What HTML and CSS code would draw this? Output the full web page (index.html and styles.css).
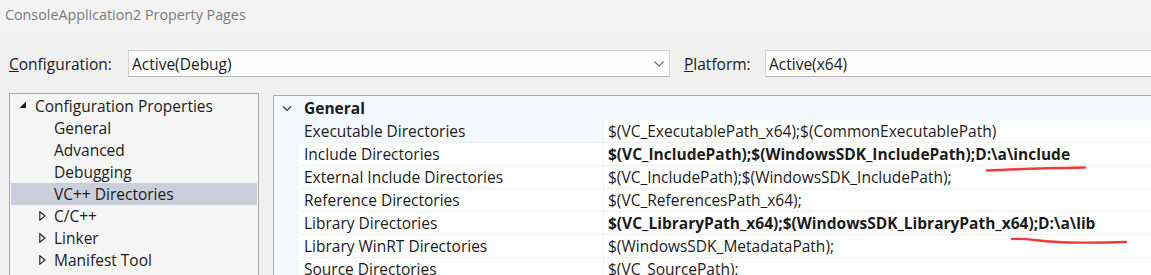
FILE: index.html
```html
<!DOCTYPE html>
<html>
<head>
<meta charset="utf-8">
<link rel="stylesheet" href="styles.css">
</head>
<body>
<div class="titlebar">ConsoleApplication2 Property Pages</div>
<div class="dialog">
  <div class="configrow">
    <span class="lbl lbl-config"><u>C</u>onfiguration:</span>
    <div class="combo combo-config">
      <span>Active(Debug)</span>
      <svg class="chev" width="12" height="8" viewBox="0 0 12 8"><path d="M1.5 1.5 L6 6 L10.5 1.5" fill="none" stroke="#6a6a6a" stroke-width="1.1"/></svg>
    </div>
    <span class="lbl lbl-plat"><u>P</u>latform:</span>
    <div class="combo combo-plat"><span>Active(x64)</span></div>
  </div>
  <div class="panes">
    <div class="tree">
      <div class="node root"><svg class="exp" width="8" height="8" viewBox="0 0 8 8"><path d="M7 0.5 L7 7 L0.5 7 Z" fill="#1e1e1e"/></svg>Configuration Properties</div>
      <div class="node child">General</div>
      <div class="node child">Advanced</div>
      <div class="node child">Debugging</div>
      <div class="node child sel">VC++ Directories</div>
      <div class="node sub"><svg class="col" width="7" height="10" viewBox="0 0 7 10"><path d="M0.8 0.8 L6 5 L0.8 9.2 Z" fill="none" stroke="#1e1e1e" stroke-width="1.1"/></svg>C/C++</div>
      <div class="node sub"><svg class="col" width="7" height="10" viewBox="0 0 7 10"><path d="M0.8 0.8 L6 5 L0.8 9.2 Z" fill="none" stroke="#1e1e1e" stroke-width="1.1"/></svg>Linker</div>
      <div class="node sub"><svg class="col" width="7" height="10" viewBox="0 0 7 10"><path d="M0.8 0.8 L6 5 L0.8 9.2 Z" fill="none" stroke="#1e1e1e" stroke-width="1.1"/></svg>Manifest Tool</div>
    </div>
    <div class="grid">
      <div class="ghead">
        <svg class="gchev" width="10" height="7" viewBox="0 0 10 7"><path d="M1 1.5 L5 5.5 L9 1.5" fill="none" stroke="#333" stroke-width="1.2"/></svg>
        <span class="gtitle">General</span>
      </div>
      <div class="grow first"><div class="gname">Executable Directories</div><div class="gval">$(VC_ExecutablePath_x64);$(CommonExecutablePath)</div></div>
      <div class="grow"><div class="gname">Include Directories</div><div class="gval b">$(VC_IncludePath);$(WindowsSDK_IncludePath);D:\a\include</div></div>
      <div class="grow"><div class="gname">External Include Directories</div><div class="gval">$(VC_IncludePath);$(WindowsSDK_IncludePath);</div></div>
      <div class="grow"><div class="gname">Reference Directories</div><div class="gval">$(VC_ReferencesPath_x64);</div></div>
      <div class="grow"><div class="gname">Library Directories</div><div class="gval b">$(VC_LibraryPath_x64);$(WindowsSDK_LibraryPath_x64);D:\a\lib</div></div>
      <div class="grow"><div class="gname">Library WinRT Directories</div><div class="gval">$(WindowsSDK_MetadataPath);</div></div>
      <div class="grow"><div class="gname">Source Directories</div><div class="gval">$(VC_SourcePath);</div></div>
      <svg class="mark mark1" width="104" height="8" viewBox="0 0 104 8"><path d="M2 5.5 C20 4.5, 50 3.5, 100 2.5" fill="none" stroke="#f0393a" stroke-width="2.4" stroke-linecap="round"/></svg>
      <svg class="mark mark2" width="120" height="10" viewBox="0 0 120 10"><path d="M2 3 C20 2, 30 6, 60 6.5 C85 7, 100 6.5, 116 6" fill="none" stroke="#f0393a" stroke-width="2.4" stroke-linecap="round"/></svg>
    </div>
  </div>
</div>
</body>
</html>
```
FILE: styles.css
```css
html, body {
  margin: 0;
  padding: 0;
  width: 1151px;
  height: 275px;
  overflow: hidden;
  background: #f0f0f0;
  font-family: "Open Sans", "Noto Sans", sans-serif;
  font-size: 15.5px;
  color: #1b1b1b;
}
.titlebar {
  height: 32px;
  line-height: 30px;
  padding-left: 5px;
  color: #7a7a7a;
  background: #f3f3f3;
  font-size: 14.3px;
}
.dialog {
  padding-top: 18px;
}
.configrow {
  display: flex;
  align-items: center;
  height: 27px;
}
.lbl {
  white-space: nowrap;
}
.lbl-config {
  margin-left: 9px;
  width: 119px;
}
.lbl-plat {
  margin-left: 14px;
  width: 81px;
}
.combo {
  box-sizing: border-box;
  height: 27px;
  background: #fdfdfd;
  border: 1px solid #cfcfcf;
  border-bottom-color: #b5b5b5;
  display: flex;
  align-items: center;
  padding-left: 3px;
}
.combo-config {
  width: 542px;
  justify-content: space-between;
  padding-right: 4px;
}
.combo-plat {
  flex: 1;
  margin-right: -10px;
}
.chev {
  display: block;
}
.panes {
  display: flex;
  align-items: flex-start;
  margin-top: 16px;
}
.tree {
  margin-left: 9px;
  width: 250px;
  height: 200px;
  box-sizing: border-box;
  border: 1px solid #a9a9a9;
  background: #f5f5f5;
  padding: 1px 1px 0 1px;
}
.node {
  height: 22px;
  line-height: 22px;
  white-space: nowrap;
  display: flex;
  align-items: center;
}
.node.root {
  padding-left: 8px;
}
.exp {
  margin-right: 8px;
  margin-top: -2px;
}
.node.child {
  padding-left: 43px;
}
.node.sub {
  padding-left: 28px;
}
.col {
  margin-right: 8px;
}
.node.sel {
  background: #cccedb;
}
.grid {
  position: relative;
  margin-left: 14px;
  margin-top: 2px;
  flex: 1;
  margin-right: -20px;
  height: 200px;
  box-sizing: border-box;
  border-top: 1px solid #a9a9a9;
  border-left: 1px solid #a9a9a9;
  background: #f4f7fb;
}
.ghead {
  height: 24px;
  display: flex;
  align-items: center;
}
.gchev {
  margin-left: 8px;
  margin-right: 12px;
}
.gtitle {
  font-weight: bold;
}
.grow {
  display: flex;
  height: 23px;
  margin-left: 25px;
  box-sizing: border-box;
  border-bottom: 1px solid #efefef;
  background: #ffffff;
  white-space: nowrap;
}
.gname {
  width: 304px;
  padding-left: 5px;
  box-sizing: border-box;
  line-height: 22px;
}
.grow.first .gname {
  background: #f4f7fb;
}
.gval {
  flex: 1;
  padding-left: 4px;
  line-height: 22px;
  border-left: 1px solid #f0f0f0;
}
.gval.b {
  font-weight: bold;
}
.mark {
  position: absolute;
  display: block;
}
.mark1 {
  left: 711px;
  top: 69px;
}
.mark2 {
  left: 736px;
  top: 140px;
}
```
